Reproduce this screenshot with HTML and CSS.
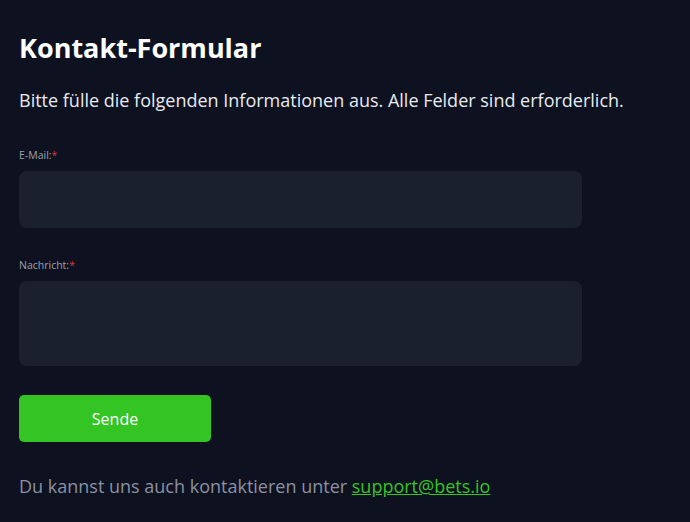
FILE: index.html
```html
<!DOCTYPE html>
<html lang="de">
<head>
<meta charset="utf-8">
<link rel="stylesheet" href="styles.css">
</head>
<body>
<main class="page">
  <h1 class="title">Kontakt-Formular</h1>
  <p class="intro">Bitte fülle die folgenden Informationen aus. Alle Felder sind erforderlich.</p>
  <form class="form">
    <div class="field">
      <label class="label">E-Mail:<span class="req">*</span></label>
      <div class="input"></div>
    </div>
    <div class="field">
      <label class="label">Nachricht:<span class="req">*</span></label>
      <div class="input textarea"></div>
    </div>
    <button type="button" class="btn">Sende</button>
  </form>
  <p class="footer">Du kannst uns auch kontaktieren unter <a class="link" href="#">support@bets.io</a></p>
</main>
</body>
</html>
```
FILE: styles.css
```css
html, body {
  margin: 0;
  background: #0e1220;
}
body {
  font-family: "Open Sans", "Noto Sans", sans-serif;
  color: #e8eaef;
}
.page {
  padding: 28px 19px 0 19px;
}
.title {
  margin: 0;
  font-size: 27px;
  font-weight: 700;
  color: #ffffff;
  line-height: 40px;
}
.intro {
  margin: 20px 0 0 0;
  font-size: 18px;
  line-height: 24px;
  color: #e8eaef;
  white-space: nowrap;
}
.form {
  margin-top: 36px;
  width: 563px;
  display: flex;
  flex-direction: column;
}
.field {
  display: flex;
  flex-direction: column;
  margin-bottom: 30px;
}
.label {
  font-size: 10.5px;
  line-height: 14px;
  color: #9ba1ae;
  margin-bottom: 9px;
}
.req {
  color: #d8394a;
}
.input {
  height: 57px;
  background: #1b202e;
  border-radius: 8px;
}
.textarea {
  height: 85px;
}
.btn {
  margin-top: -1px;
  width: 192px;
  height: 47px;
  background: #34c423;
  border: none;
  border-radius: 5px;
  color: #ffffff;
  font-family: inherit;
  font-size: 16px;
}
.footer {
  margin: 32px 0 0 0;
  font-size: 18px;
  line-height: 24px;
  color: #8a91a1;
}
.link {
  color: #35c424;
}
```
